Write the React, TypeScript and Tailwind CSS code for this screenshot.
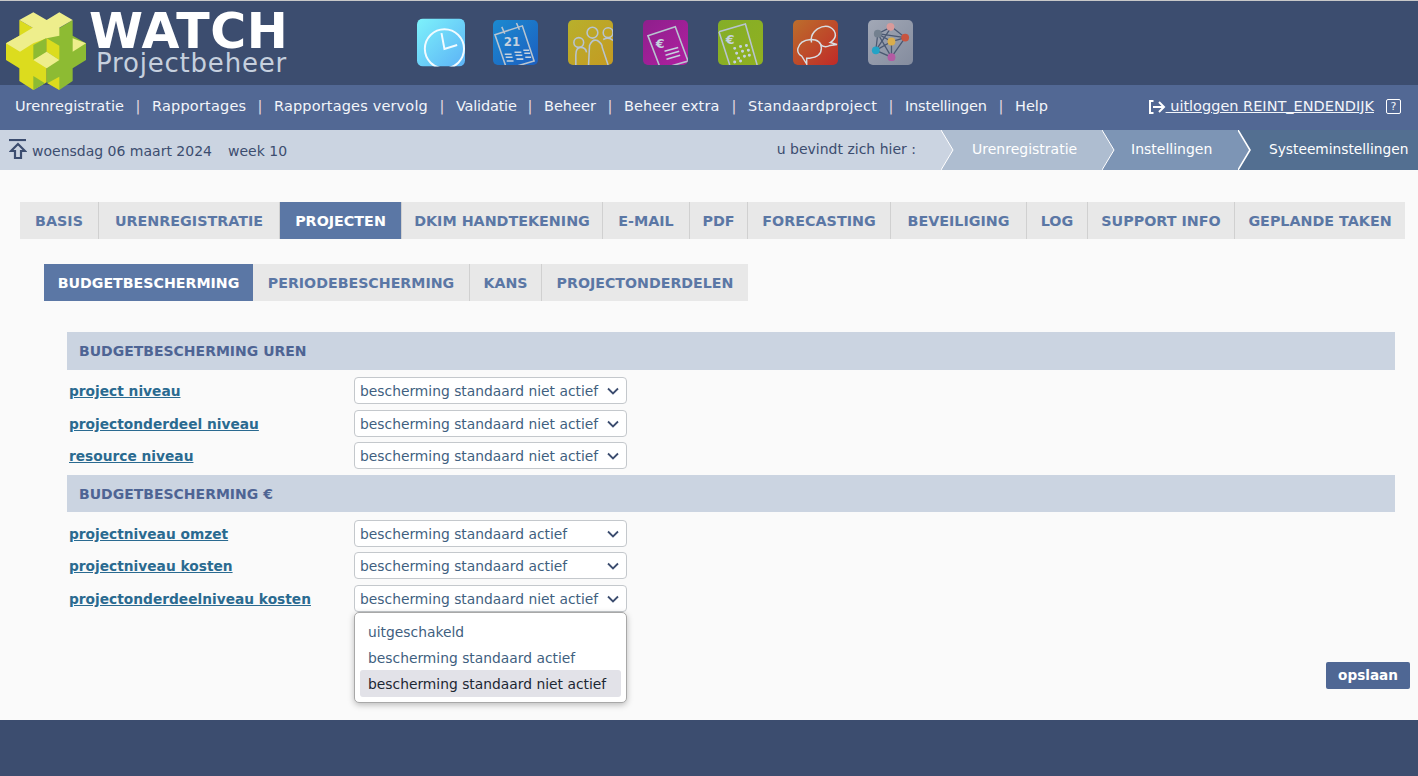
import React from "react";

const nav: [string, number, number][] = [["Urenregistratie",109,0],["Rapportages",94,0.2],["Rapportages vervolg",154,0.16],["Validatie",60,-0.2],["Beheer",52,0],["Beheer extra",96,0.1],["Standaardproject",129,0.25],["Instellingen",82,-0.2],["Help",32,0]];
const tabs: [string, number][] = [["BASIS",78],["URENREGISTRATIE",180],["PROJECTEN",121],["DKIM HANDTEKENING",200],["E-MAIL",86],["PDF",57],["FORECASTING",142],["BEVEILIGING",135],["LOG",60],["SUPPORT INFO",146],["GEPLANDE TAKEN",170]];
const sub: [string, number][] = [["BUDGETBESCHERMING",209],["PERIODEBESCHERMING",216],["KANS",71],["PROJECTONDERDELEN",206]];

function Logo() {
  const L = "#eeee8c", G = "#8dbb33", Y = "#dcdc1e";
  return (
    <svg width="95" height="90" viewBox="0 0 285 270" className="absolute left-0 top-[4px] z-10">
      <polygon points="18,115 58,92 58,45 140,92 140,232 100,255 58,228 58,190 18,165" fill={Y}/>
      <polygon points="140,92 218,45 218,92 258,115 258,165 218,190 218,228 178,255 140,232" fill={G}/>
      <polygon points="58,45 100,22 140,45 178,22 218,45 178,68 178,92 140,100 100,115 60,140 18,115 58,92 98,68" fill={L}/>
      <polygon points="218,100 258,115 218,140" fill={L}/>
      <polygon points="100,120 138,100 138,145 100,165" fill={G}/>
      <polygon points="140,100 178,122 178,165 140,140" fill={Y}/>
      <polygon points="100,165 140,140 178,165 140,190" fill={L}/>
      <polygon points="100,213 135,235 100,255" fill={G}/>
      <polygon points="142,235 178,215 178,255" fill={Y}/>
    </svg>
  );
}

function Tile({ id, from, to, children }: { id: string; from: string; to: string; children: React.ReactNode }) {
  return (
    <svg width="45" height="45" viewBox="0 0 46 46">
      <defs>
        <linearGradient id={id} x1="0" y1="0" x2="1" y2="1"><stop offset="0" stopColor={from}/><stop offset="1" stopColor={to}/></linearGradient>
        <clipPath id={"c" + id}><rect width="46" height="46" rx="5"/></clipPath>
      </defs>
      <g clipPath={`url(#c${id})`}>
        <rect width="46" height="46" fill={`url(#${id})`}/>
        {children}
      </g>
    </svg>
  );
}

const S = { fill: "none", stroke: "#b8c4d0", strokeWidth: 1.6 } as const;

function Icons() {
  return (
    <div className="flex items-center gap-[30px] ml-[130px] mt-[17px] h-[49px]">
      <svg width="48" height="49" viewBox="0 0 49 49" className="-mr-[2px]">
        <defs>
          <linearGradient id="clk" x1="0" y1="0" x2="1" y2="1"><stop offset="0" stopColor="#7df2fb"/><stop offset="1" stopColor="#5cb2f6"/></linearGradient>
          <clipPath id="clkc"><rect width="49" height="49" rx="6"/></clipPath>
        </defs>
        <g clipPath="url(#clkc)">
          <rect width="49" height="49" fill="url(#clk)"/>
          <circle cx="28" cy="31" r="20" fill="none" stroke="#f2fbff" strokeWidth="2"/>
          <path d="M25 15 L28 31 L41 27" fill="none" stroke="#f2fbff" strokeWidth="2"/>
        </g>
      </svg>
      <Tile id="t1" from="#1b8ad0" to="#1c5fc0">
        <g {...S}>
          <path d="M2 15 L30 6 L42 42 L14 50 Z"/>
          <path d="M9 7 L12 14 M24 3 L27 10"/>
        </g>
        <text x="11" y="27" fill="#c5d2df" fontSize="12" fontWeight="700" fontFamily="DejaVu Sans, sans-serif">21</text>
        <path d="M12 35h7M22 33h7M31 31h6M13 38h7M23 36h7M32 34h6M14 42h7M24 40h7M33 38h6" stroke="#c5d2df" strokeWidth="1.6" fill="none"/>
      </Tile>
      <Tile id="t2" from="#b8b02c" to="#c49a22">
        <g {...S}>
          <circle cx="11" cy="23" r="5"/><circle cx="25" cy="13" r="5.5"/><circle cx="41" cy="13" r="5"/>
          <path d="M8 46 V36 Q8 28 13 28 Q18 28 19 33 M21 46 L22 26 Q25 19 30 21 Q35 24 35 28 L41 46 M36 20 Q42 17 46 21"/>
        </g>
      </Tile>
      <Tile id="t3" from="#8e1f8c" to="#b020a0">
        <g {...S}>
          <path d="M5 16 L33 7 L46 42 L18 50 Z"/>
        </g>
        <text x="13" y="29" fill="#c5d2df" fontSize="13" fontWeight="700" fontFamily="DejaVu Sans, sans-serif">€</text>
        <path d="M22 32l14-4M23 36l14-4M24 40l14-4" stroke="#c5d2df" strokeWidth="1.6" fill="none"/>
      </Tile>
      <Tile id="t4" from="#84ae28" to="#90b020">
        <g {...S}>
          <path d="M1 12 L28 4 L40 46 M1 12 L12 46"/>
        </g>
        <text x="8" y="25" fill="#c5d2df" fontSize="13" fontWeight="700" fontFamily="DejaVu Sans, sans-serif">€</text>
        <path d="M17 29h.1M23 27h.1M29 26h.1M19 34h.1M25 32h.1M31 31h.1M21 39h.1M27 37h.1M32 36h.1M17 43h.1M23 42h.1" stroke="#c5d2df" strokeWidth="3" strokeLinecap="round" fill="none"/>
      </Tile>
      <Tile id="t5" from="#bc6e2c" to="#c02a28">
        <g fill="none" stroke="#d8dde2" strokeWidth="1.5">
          <path d="M19 23 Q17 15 25 9 Q36 3 42 11 Q46 18 38 23 L45 25 L38 26 Q32 29 28 25"/>
          <path d="M5 29 Q7 21 18 20 Q29 20 29 29 Q29 38 17 39 L14 39 L14 45 L9 37 Q4 34 5 29 Z"/>
        </g>
      </Tile>
      <Tile id="t6" from="#a2a8b6" to="#848c9e">
        <g stroke="#4a5872" strokeWidth="1.3" fill="none">
          <path d="M10 14 L24 7 L38 18 L24 22 Z M8 31 L24 22 L24 38 Z M8 31 L10 14 L24 38 M24 7 L38 18 L24 38 M24 7 L8 31 M10 14 L38 18"/>
        </g>
        <circle cx="10" cy="14" r="4" fill="#73808f"/>
        <circle cx="23" cy="7" r="4" fill="#d99a9a"/>
        <circle cx="38" cy="18" r="4" fill="#c8543f"/>
        <circle cx="24" cy="22" r="4" fill="#d9ad4c"/>
        <circle cx="8" cy="31" r="4" fill="#23a3c6"/>
        <circle cx="24" cy="38" r="4" fill="#b35aa3"/>
      </Tile>
    </div>
  );
}

function Select({ value, open }: { value: string; open?: boolean }) {
  return (
    <div className="relative">
      <div className="w-[273px] h-[27px] bg-white border border-[#c4c8cc] rounded-[4px] flex items-center justify-between pl-[5px] pr-[5px] text-[#3f5f80] text-[13.85px]">
        <span className="mt-[2px]">{value}</span>
        <svg width="16" height="16" viewBox="0 0 16 16" fill="none" stroke="#3c4d6f" strokeWidth="1.8"><path d="M3 5.5 L8 10.5 L13 5.5"/></svg>
      </div>
      {open && (
        <div className="absolute left-0 top-[27px] z-20 w-[273px] h-[91px] bg-white border border-[#a8a8a8] rounded-[5px] shadow-[0_2px_6px_rgba(0,0,0,0.25)] px-[5px] py-[5px] text-[13.85px]">
          <div className="h-[26px] flex items-center pl-[8px] pt-[2px] text-[#3f5f80]">uitgeschakeld</div>
          <div className="h-[26px] flex items-center pl-[8px] pt-[2px] text-[#3f5f80]">bescherming standaard actief</div>
          <div className="h-[27px] flex items-center pl-[8px] pt-[1px] text-[#1c2733] bg-[#e2e2e8] rounded-[3px]">bescherming standaard niet actief</div>
        </div>
      )}
    </div>
  );
}

function Row({ label, value, open, mt }: { label: string; value: string; open?: boolean; mt: string }) {
  return (
    <div className={`flex items-center ml-[2px] ${mt}`}>
      <a className="w-[285px] mt-[2px] font-bold text-[13.75px] underline text-[#2a6a90]">{label}</a>
      <Select value={value} open={open} />
    </div>
  );
}

function Section({ title, h, mt, pt }: { title: string; h: string; mt: string; pt: string }) {
  return (
    <div className={`bg-[#cbd4e1] flex items-center pl-[12px] font-bold text-[14px] text-[#4e6494] ${h} ${mt} ${pt}`}>{title}</div>
  );
}

function Crumb({ label, w, pl, bg, prev, sw, size }: { label: string; w: string; pl: string; bg: string; prev: string; sw: number; size: string }) {
  return (
    <div className={`relative flex items-center ${w} ${pl} ${bg} ${size}`}>
      <svg width="14" height="40" viewBox="0 0 14 40" className="absolute left-0 top-0">
        <polygon points="0,0 12,20 0,40" fill={prev} />
        <path d="M0 0 L12 20 L0 40" fill="none" stroke="#fff" strokeWidth={sw} />
      </svg>
      <span className="relative -mt-[2px]">{label}</span>
    </div>
  );
}

const na = "bescherming standaard niet actief";
const ac = "bescherming standaard actief";

export default function App() {
  return (
    <div className="w-[1418px] h-[776px] overflow-hidden bg-[#3c4d6f] relative" style={{ fontFamily: '"DejaVu Sans", Verdana, sans-serif' }}>
      <div className="h-px bg-[#c8c8c8]" />
      <header className="h-[84px] bg-[#3c4d6f] flex relative">
        <Logo />
        <div className="ml-[89px] w-[198px] pt-[8px] flex flex-col text-white">
          <div className="text-[49px] leading-[46px] font-bold whitespace-nowrap tracking-[0.6px]">WATCH</div>
          <div className="text-[26px] leading-[16px] ml-[7px] text-[#c6d0de] tracking-[0.8px] whitespace-nowrap">Projectbeheer</div>
        </div>
        <Icons />
      </header>
      <nav className="h-[45px] bg-[#526894] flex items-center pl-[15px] pr-[17px] pb-[2px] text-[14.5px] text-[#f2f5fa]">
        {nav.map(([n, w, t], i) => (
          <React.Fragment key={n}>
            {i > 0 && <span className="w-[28px] text-center text-[#e6d8e0]">|</span>}
            <span className="whitespace-nowrap" style={{ width: w, letterSpacing: t }}>{n}</span>
          </React.Fragment>
        ))}
        <div className="ml-auto flex items-center">
          <svg width="18" height="16" viewBox="0 0 18 16" fill="none" stroke="#fff" strokeWidth="2"><path d="M5.5 2H2v12h3.5"/><path d="M5 8h11M11 3l5 5-5 5"/></svg>
          <span className="underline whitespace-pre"> uitloggen REINT_ENDENDIJK</span>
          <span className="ml-[12px] w-[15px] h-[15px] border border-white rounded-[2px] flex items-center justify-center text-[11px] leading-none">?</span>
        </div>
      </nav>
      <div className="h-[40px] bg-[#cbd4e1] flex items-center text-[14px] text-[#3c4d6f] pl-[9px]">
        <svg width="18" height="22" viewBox="0 0 18 22" fill="none" stroke="#3c4d6f" strokeWidth="2.2" className="mr-[5px]"><path d="M0 1h17"/><path d="M9 5 L2 12h4v7h6v-7h4Z"/></svg>
        <span className="mt-[2px]">woensdag 06 maart 2024</span>
        <span className="ml-[16px] mt-[2px]">week 10</span>
        <span className="ml-auto mr-[25px] -mt-[2px]">u bevindt zich hier :</span>
        <div className="flex h-full text-white">
          <Crumb label="Urenregistratie" w="w-[161px]" pl="pl-[31px]" bg="bg-[#aebdd0]" prev="#cbd4e1" sw={1} size="text-[14px]" />
          <Crumb label="Instellingen" w="w-[136px]" pl="pl-[29px]" bg="bg-[#7d95b5]" prev="#aebdd0" sw={1} size="text-[14px]" />
          <Crumb label="Systeeminstellingen" w="w-[180px]" pl="pl-[31px]" bg="bg-[#536f91]" prev="#7d95b5" sw={1.6} size="text-[13.75px]" />
        </div>
      </div>
      <main className="h-[550px] bg-[#fafafa] pt-[32px] relative">
        <div className="flex ml-[20px] w-[1385px] h-[37px] bg-[#e8e8e8] font-bold text-[14.3px]">
          {tabs.map(([t, w], i) => (
            <React.Fragment key={t}>
              {i > 0 && <div className="w-px bg-[#d0d0d0]" />}
              <div style={{ width: w }} className={`flex items-center justify-center whitespace-nowrap pt-[2px] ${t === "PROJECTEN" ? "bg-[#5b77a5] text-white" : "text-[#5b77a5]"}`}>{t}</div>
            </React.Fragment>
          ))}
        </div>
        <div className="flex ml-[44px] mt-[25px] h-[37px] font-bold text-[14.2px] w-max bg-[#e8e8e8]">
          {sub.map(([t, w], i) => (
            <React.Fragment key={t}>
              {i > 1 && <div className="w-px bg-[#d0d0d0]" />}
              <div style={{ width: w }} className={`flex items-center justify-center whitespace-nowrap pt-[2px] ${i === 0 ? "bg-[#5b77a5] text-white" : "text-[#5b77a5]"}`}>{t}</div>
            </React.Fragment>
          ))}
        </div>
        <div className="ml-[67px] w-[1328px] mt-[31px]">
          <Section title="BUDGETBESCHERMING UREN" h="h-[38px]" mt="mt-0" pt="pt-0" />
          <Row label="project niveau" value={na} mt="mt-[7px]" />
          <Row label="projectonderdeel niveau" value={na} mt="mt-[6px]" />
          <Row label="resource niveau" value={na} mt="mt-[5px]" />
          <Section title="BUDGETBESCHERMING €" h="h-[37px]" mt="mt-[6px]" pt="pt-[1px]" />
          <Row label="projectniveau omzet" value={ac} mt="mt-[8px]" />
          <Row label="projectniveau kosten" value={ac} mt="mt-[5px]" />
          <Row label="projectonderdeelniveau kosten" value={na} open mt="mt-[6px]" />
        </div>
        <div className="flex justify-end mr-[8px] mt-[50px]">
          <button className="w-[84px] h-[27px] bg-[#4f6794] text-white font-bold text-[13.6px] rounded-[2px]">opslaan</button>
        </div>
      </main>
    </div>
  );
}
